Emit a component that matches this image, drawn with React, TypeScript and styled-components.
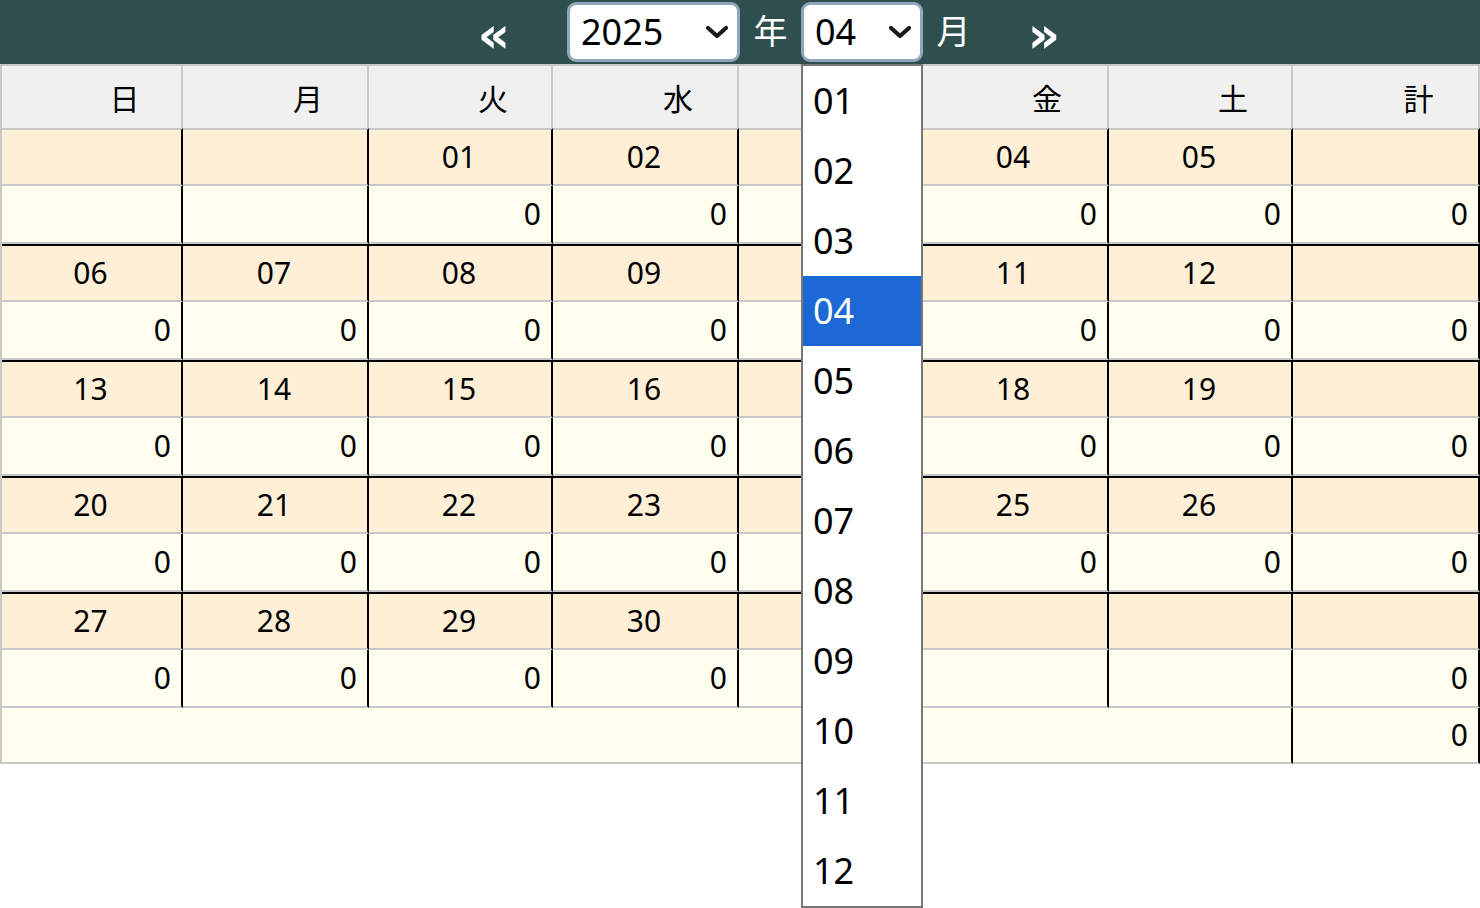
import React from 'react';
import styled, { createGlobalStyle } from 'styled-components';

const GlobalStyle = createGlobalStyle`
  html, body { margin: 0; padding: 0; background: #ffffff; }
  body { font-family: "Noto Sans", "Noto Sans CJK JP", sans-serif; color: #000; }
`;

const Page = styled.div`
  width: 1480px;
  min-height: 908px;
`;

const TopBar = styled.header`
  height: 64px;
  background: #2f4f4f;
  display: flex;
  align-items: center;
  justify-content: center;
  padding-left: 58px;
  box-sizing: border-box;
`;

const NavButton = styled.span<{ $gap: number; $side: 'left' | 'right' }>`
  width: 60px;
  text-align: center;
  color: #ffffff;
  font-family: "DejaVu Sans", sans-serif;
  font-size: 50px;
  font-weight: bold;
  line-height: 1;
  padding-top: 6px;
  ${(p) => (p.$side === 'left' ? `margin-right: ${p.$gap}px;` : `margin-left: ${p.$gap}px;`)}
  cursor: pointer;
`;

const SelectBox = styled.div<{ $w: number }>`
  position: relative;
  width: ${(p) => p.$w}px;
  height: 60px;
  box-sizing: border-box;
  border: 3px solid #8ea7bd;
  border-radius: 9px;
  background: #ffffff;
  display: flex;
  align-items: center;
  justify-content: space-between;
  padding: 0 8px 0 11px;
  font-size: 36px;
  color: #000;
`;

const SelectValue = styled.span`
  line-height: 1;
`;

const Label = styled.span`
  width: 61px;
  text-align: center;
  color: #ffffff;
  font-family: "Noto Sans CJK JP", sans-serif;
  font-size: 34px;
  line-height: 1;
  padding-bottom: 4px;
`;

const OptionList = styled.ul`
  position: absolute;
  top: 59px;
  left: -3px;
  width: 122px;
  margin: 0;
  padding: 0;
  list-style: none;
  box-sizing: border-box;
  border: 2px solid #777777;
  background: #ffffff;
  z-index: 10;
`;

const OptionItem = styled.li<{ $selected: boolean }>`
  height: 70px;
  display: flex;
  align-items: center;
  padding-left: 10px;
  font-size: 36px;
  line-height: 1;
  background: ${(p) => (p.$selected ? '#1c68d4' : '#ffffff')};
  color: ${(p) => (p.$selected ? '#ffffff' : '#000000')};
`;

const Table = styled.table`
  border-collapse: separate;
  border-spacing: 0;
  table-layout: fixed;
  width: 1480px;
  border-top: 2px solid #c8c8c8;
  border-left: 2px solid #c8c8c8;
  font-size: 30px;
  line-height: 1.2;
`;

const HeadCell = styled.th`
  height: 62px;
  padding: 0 0 0 66px;
  background: #f0f0f0;
  border-right: 2px solid #c8c8c8;
  font-weight: normal;
  text-align: center;
  font-family: "Noto Sans CJK JP", sans-serif;
`;

const DateCell = styled.td<{ $first: boolean }>`
  height: 54px;
  padding: 0 2px 0 0;
  background: #ffefd6;
  border-top: 2px solid ${(p) => (p.$first ? '#c8c8c8' : '#000000')};
  border-bottom: 2px solid #c8c8c8;
  border-right: 2px solid #000000;
  text-align: center;
`;

const ValueCell = styled.td`
  height: 56px;
  padding: 0 10px 0 0;
  background: #fffff0;
  border-bottom: 2px solid #c8c8c8;
  border-right: 2px solid #000000;
  text-align: right;
`;

const TotalCell = styled.td`
  height: 54px;
  padding: 0 10px 0 0;
  background: #fffff0;
  border-bottom: 2px solid #c8c8c8;
  border-right: 2px solid #000000;
  text-align: right;
`;

const Chevron = () => (
  <svg width="24" height="14" viewBox="0 0 24 14" fill="none">
    <polyline points="3,3 12,11 21,3" stroke="#1a1a1a" strokeWidth="4.2" strokeLinecap="round" strokeLinejoin="round" />
  </svg>
);

const colWidths = [181, 186, 184, 186, 182, 188, 184, 187];
const heads = ['日', '月', '火', '水', '木', '金', '土', '計'];

type Week = { dates: string[]; values: (number | null)[]; total: number };

const weeks: Week[] = [
  { dates: ['', '', '01', '02', '03', '04', '05'], values: [null, null, 0, 0, 0, 0, 0], total: 0 },
  { dates: ['06', '07', '08', '09', '10', '11', '12'], values: [0, 0, 0, 0, 0, 0, 0], total: 0 },
  { dates: ['13', '14', '15', '16', '17', '18', '19'], values: [0, 0, 0, 0, 0, 0, 0], total: 0 },
  { dates: ['20', '21', '22', '23', '24', '25', '26'], values: [0, 0, 0, 0, 0, 0, 0], total: 0 },
  { dates: ['27', '28', '29', '30', '', '', ''], values: [0, 0, 0, 0, null, null, null], total: 0 },
];

const months = ['01', '02', '03', '04', '05', '06', '07', '08', '09', '10', '11', '12'];

export default function App() {
  return (
    <Page>
      <GlobalStyle />
      <TopBar>
        <NavButton $side="left" $gap={43}>«</NavButton>
        <SelectBox $w={173}>
          <SelectValue>2025</SelectValue>
          <Chevron />
        </SelectBox>
        <Label>年</Label>
        <SelectBox $w={122}>
          <SelectValue>04</SelectValue>
          <Chevron />
          <OptionList>
            {months.map((m) => (
              <OptionItem key={m} $selected={m === '04'}>{m}</OptionItem>
            ))}
          </OptionList>
        </SelectBox>
        <Label>月</Label>
        <NavButton $side="right" $gap={30}>»</NavButton>
      </TopBar>
      <Table>
        <colgroup>
          {colWidths.map((w, i) => (
            <col key={i} style={{ width: w }} />
          ))}
        </colgroup>
        <thead>
          <tr>
            {heads.map((h) => (
              <HeadCell key={h}>{h}</HeadCell>
            ))}
          </tr>
        </thead>
        <tbody>
          {weeks.map((w, wi) => (
            <React.Fragment key={wi}>
              <tr>
                {w.dates.map((d, i) => (
                  <DateCell key={i} $first={wi === 0}>{d}</DateCell>
                ))}
                <DateCell $first={wi === 0} />
              </tr>
              <tr>
                {w.values.map((v, i) => (
                  <ValueCell key={i}>{v === null ? '' : v}</ValueCell>
                ))}
                <ValueCell>{w.total}</ValueCell>
              </tr>
            </React.Fragment>
          ))}
          <tr>
            <TotalCell colSpan={7} />
            <TotalCell>0</TotalCell>
          </tr>
        </tbody>
      </Table>
    </Page>
  );
}
